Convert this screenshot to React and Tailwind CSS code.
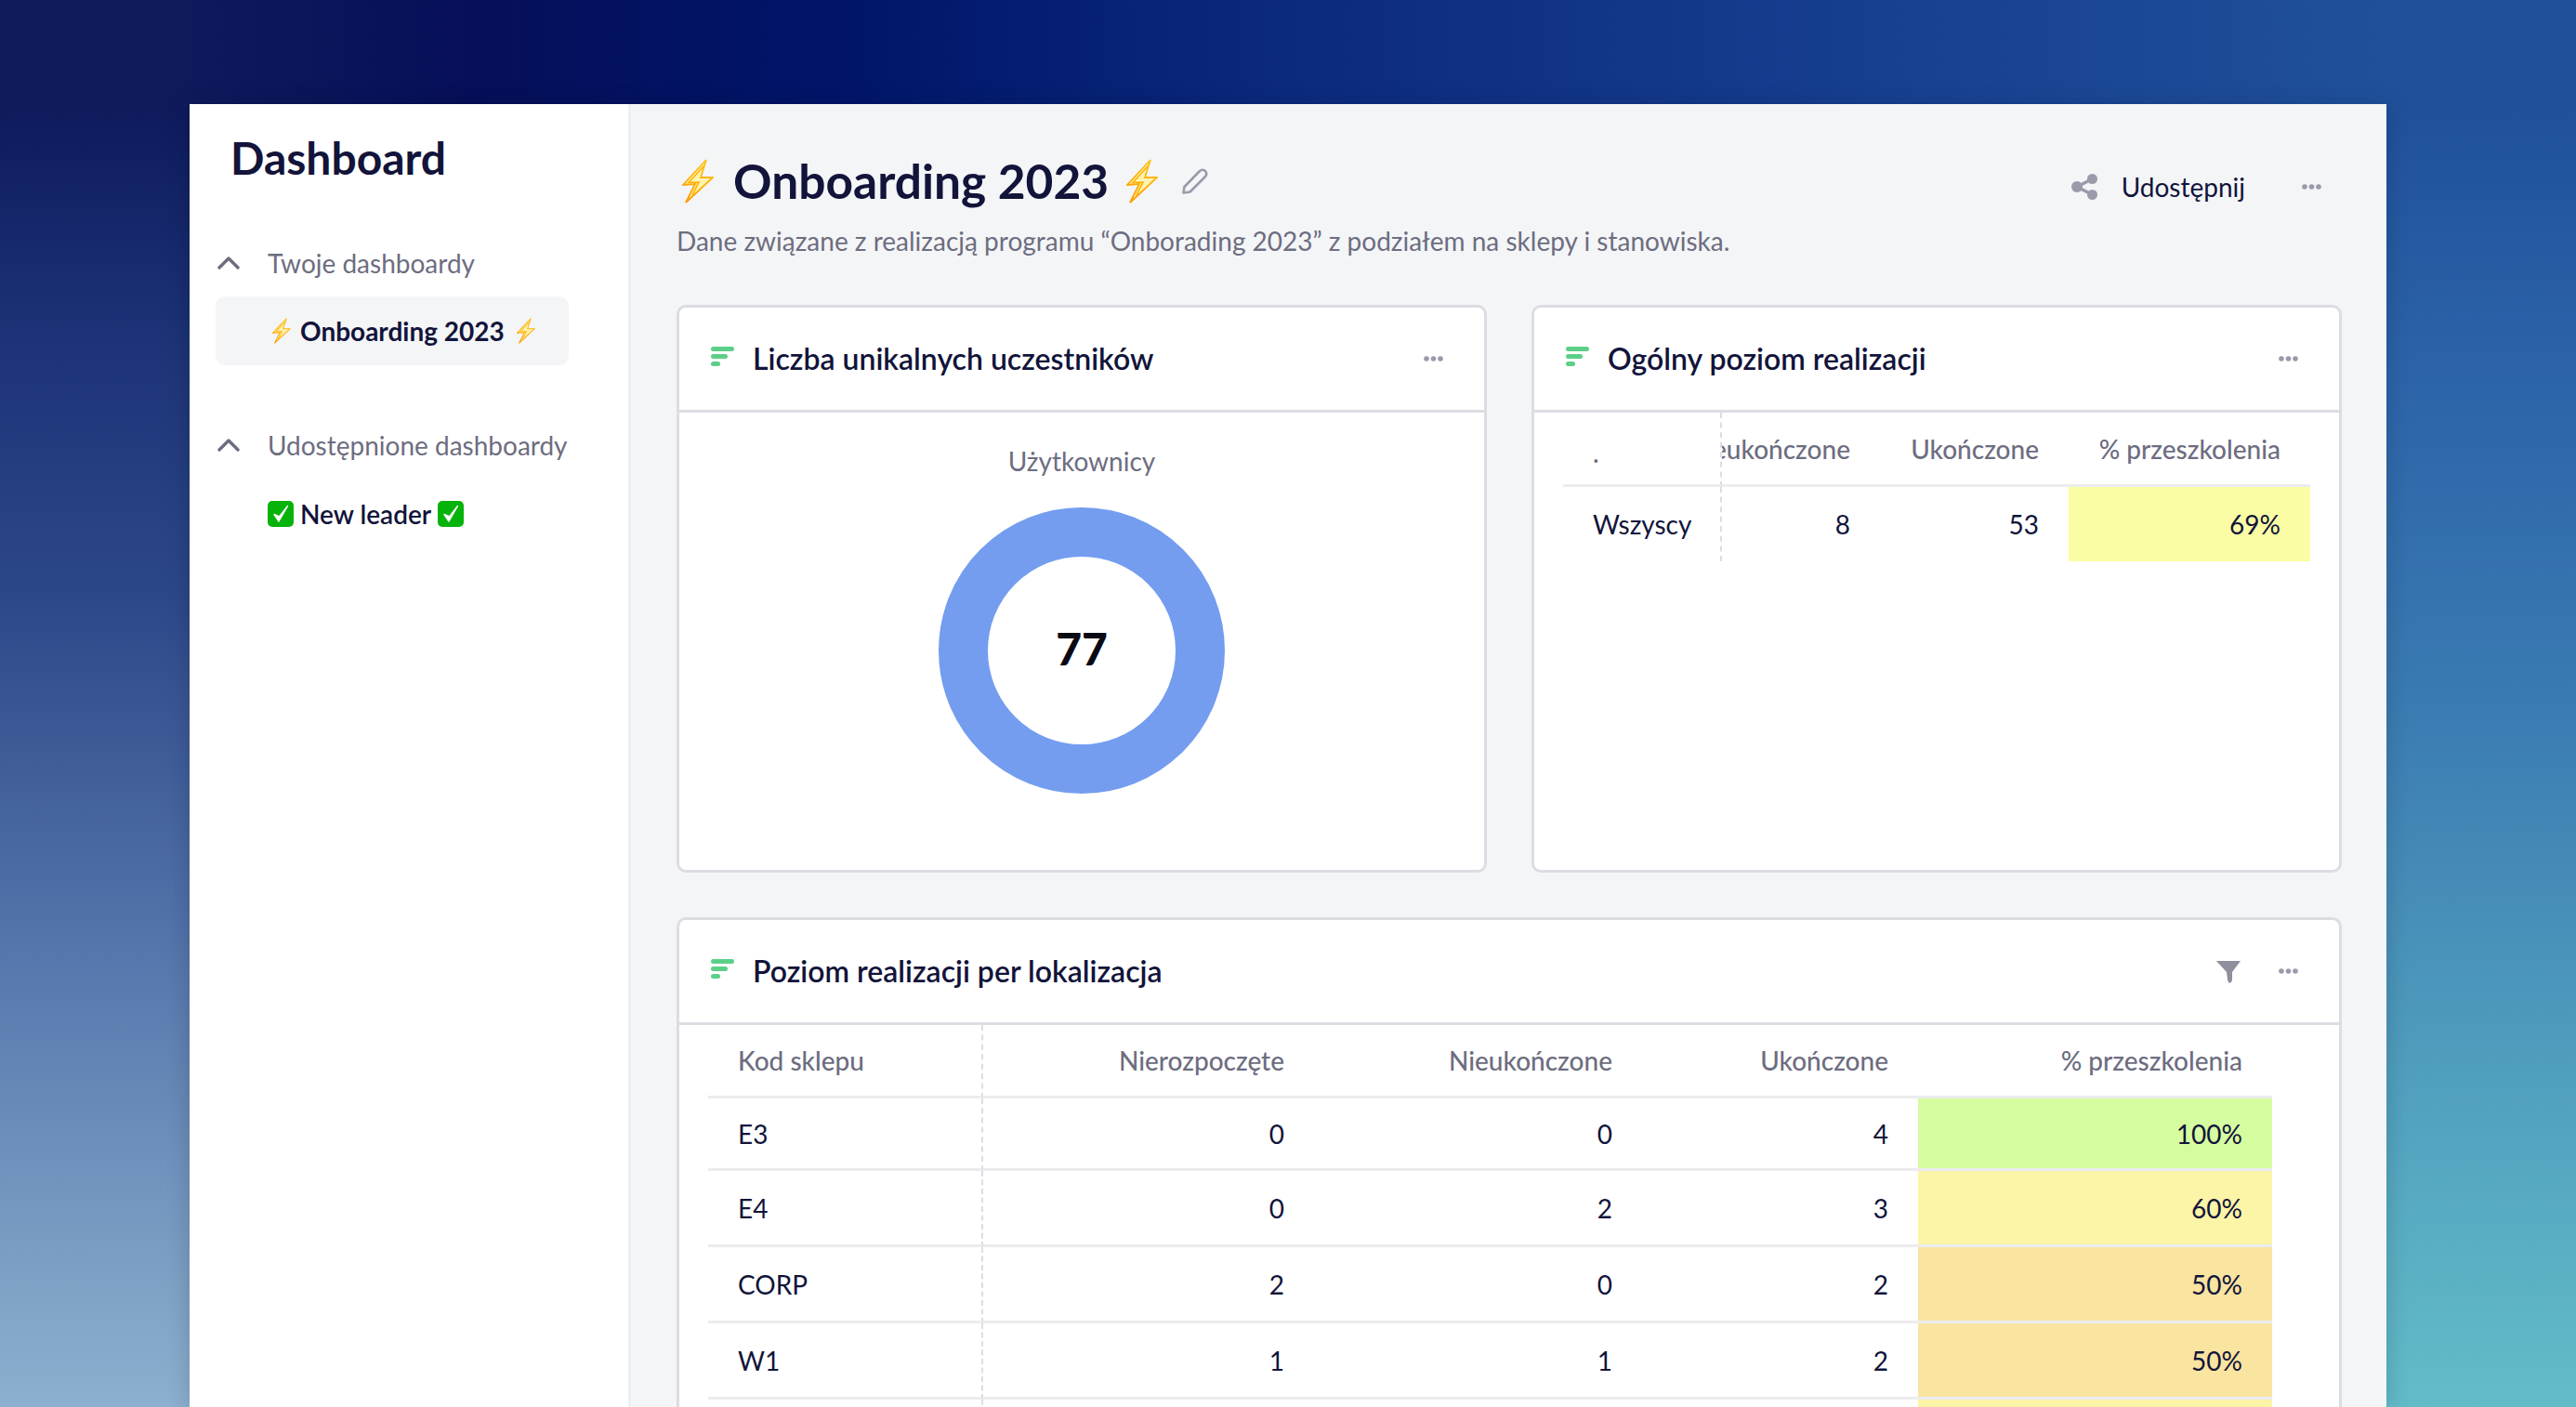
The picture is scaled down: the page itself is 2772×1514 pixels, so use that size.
const F = "font-['Lato','Noto_Sans',sans-serif]";

function Bolt({ className }) {
  return (
    <svg viewBox="0 0 34 48" className={className}>
      <defs>
        <linearGradient id="bg" x1="0.7" y1="0" x2="0.3" y2="1">
          <stop offset="0" stopColor="#ffc21a" />
          <stop offset="1" stopColor="#ff9d00" />
        </linearGradient>
      </defs>
      <path d="M26 1 L1 28 L14 27 L4 47 L33 20 L20 20 Z" fill="#fff3b0" stroke="url(#bg)" strokeWidth="1.8" strokeLinejoin="miter" />
      <path d="M23 8 L7 25.5 L18 25 L11 39" fill="none" stroke="#ffb300" strokeWidth="1.6" />
    </svg>
  );
}

function Check({ className }) {
  return (
    <svg viewBox="0 0 28 28" className={className}>
      <rect x="0" y="0" width="28" height="28" rx="5" fill="#06b30b" />
      <path d="M7 14.5 L12 22 L21.5 5.5 L12.5 17 Z" fill="#fff" stroke="#fff" strokeWidth="1.4" strokeLinejoin="round" />
    </svg>
  );
}

function Bars() {
  return (
    <svg viewBox="0 0 25 21" className="w-[25px] h-[21px] shrink-0 -mt-[6px]">
      <rect x="0" y="0" width="25" height="5" rx="2.5" fill="#5ccf89" />
      <rect x="0" y="8" width="18" height="5" rx="2.5" fill="#5ccf89" />
      <rect x="0" y="16" width="10" height="5" rx="2.5" fill="#5ccf89" />
    </svg>
  );
}

function Dots({ className = "" }) {
  return (
    <svg viewBox="0 0 21 6" className={`w-[21px] h-[6px] shrink-0 ${className}`}>
      <circle cx="3" cy="3" r="2.8" fill="#9a9aaa" />
      <circle cx="10.5" cy="3" r="2.8" fill="#9a9aaa" />
      <circle cx="18" cy="3" r="2.8" fill="#9a9aaa" />
    </svg>
  );
}

function Chevron() {
  return (
    <svg viewBox="0 0 24 14" className="w-[24px] h-[14px] shrink-0" fill="none" stroke="#6d6d80" strokeWidth="3.4" strokeLinecap="round" strokeLinejoin="round">
      <path d="M2 12 L12 2 L22 12" />
    </svg>
  );
}

function CardHead({ title, children }) {
  return (
    <div className="h-[113px] flex items-center pl-[34px] pr-[44px] border-b-[3px] border-[#dcdde2] shrink-0">
      <Bars />
      <span className="ml-[20px] text-[32px] font-semibold text-[#12143a] whitespace-nowrap">{title}</span>
      <div className="ml-auto flex items-center gap-[41px]">{children}<Dots /></div>
    </div>
  );
}

const FIRST = "[border-right:2px_dashed_#dcdde2]";
const FIRST_B = "[border-right:2px_dashed_#dcdde2] [border-bottom:3px_solid_#ececef]";

const rows = [
  ["E3", "0", "0", "4", "100%", "bg-[#d6fca0]", "h-[78px]"],
  ["E4", "0", "2", "3", "60%", "bg-[#fcf4a6]", "h-[82px]"],
  ["CORP", "2", "0", "2", "50%", "bg-[#f9e4a0]", "h-[82px]"],
  ["W1", "1", "1", "2", "50%", "bg-[#f9e4a0]", "h-[82px]"],
  ["", "", "", "", "", "bg-[#fcf4a6]", "h-[82px]"],
];

function LocRow({ r }) {
  return (
    <div className={`flex text-[28px] text-[#12143a] items-stretch ${r[6]} shrink-0`}>
      <div className={`w-[296px] pl-[32px] flex items-center ${FIRST_B}`}>{r[0]}</div>
      {[["w-[356px]", r[1]], ["w-[353px]", r[2]], ["w-[297px]", r[3]]].map(([w, v], i) => (
        <div key={i} className={`${w} pr-[32px] flex items-center justify-end border-b-[3px] border-[#ececef]`}>{v}</div>
      ))}
      <div className={`w-[381px] pr-[32px] flex items-center justify-end border-b-[3px] border-[#ececef] ${r[5]}`}>{r[4]}</div>
    </div>
  );
}

export default function App() {
  return (
    <div className={`${F} w-[2772px] h-[1514px] overflow-hidden pt-[112px] pl-[204px] [background:linear-gradient(90deg,#0e1a5c_0px,#060f58_300px,#00156a_700px,#0c2a7e_1200px,#163f90_1800px,#20509b_2364px)_204px_0/2364px_112px_no-repeat,linear-gradient(180deg,#0e1a5c_0%,#0e1a5c_7.4%,#1c3377_24%,#2c4788_42%,#5676ad_68%,#7598c0_86%,#8db0d0_100%)_left/50%_100%_no-repeat,linear-gradient(180deg,#20509b_0%,#20509b_7.4%,#2b62a8_25%,#3a7bb2_50%,#4b96bb_70%,#57aac2_85%,#62bcc8_100%)_right/50%_100%_no-repeat]`}>
      <div className="relative w-[2364px] h-[1402px] flex bg-[#f4f5f7] shadow-[0_4px_24px_rgba(0,0,0,0.18)]">
        <aside className="w-[475px] h-full shrink-0 bg-white border-r-[3px] border-[#eeeff2]">
          <div className="pl-[44px] pt-[24px] text-[48px] leading-[68px] font-bold text-[#12143a]">Dashboard</div>
          <div className="mt-[59px] flex items-center pl-[30px] h-[40px]">
            <Chevron />
            <span className="ml-[30px] text-[28px] text-[#6d6d80] whitespace-nowrap">Twoje dashboardy</span>
          </div>
          <div className="mt-[16px] ml-[28px] w-[380px] h-[74px] rounded-[10px] bg-[#f4f5f7] flex items-center pl-[61px] whitespace-nowrap">
            <Bolt className="w-[20px] h-[28px] shrink-0" />
            <span className="ml-[10px] text-[28px] font-bold text-[#12143a]">Onboarding 2023</span>
            <Bolt className="ml-[13px] w-[20px] h-[28px] shrink-0" />
          </div>
          <div className="mt-[66px] flex items-center pl-[30px] h-[40px]">
            <Chevron />
            <span className="ml-[30px] text-[28px] text-[#6d6d80] whitespace-nowrap">Udostępnione dashboardy</span>
          </div>
          <div className="mt-[40px] pl-[84px] flex items-center h-[28px] whitespace-nowrap">
            <Check className="w-[28px] h-[28px] shrink-0" />
            <span className="ml-[7px] text-[28px] font-semibold text-[#12143a]">New leader</span>
            <Check className="ml-[7px] w-[28px] h-[28px] shrink-0" />
          </div>
        </aside>

        <main className="flex-1 min-w-0 pl-[49px] pr-[48px]">
          <div className="h-[216px] relative">
            <div className="flex items-center pt-[59px] h-[107px] pl-[6px] whitespace-nowrap">
              <Bolt className="w-[34px] h-[48px] shrink-0" />
              <span className="ml-[21px] text-[51.5px] font-bold text-[#12143a]">Onboarding 2023</span>
              <Bolt className="ml-[19px] w-[34px] h-[48px] shrink-0" />
              <svg viewBox="0 0 30 30" className="ml-[25px] w-[30px] h-[30px] shrink-0" fill="none" stroke="#9a9aaa" strokeWidth="2.6" strokeLinejoin="round">
                <path d="M2.5 27.5 L3.5 21 L20 4 Q23 1.5 26 4 Q28.5 7 26 10 L9.5 26.5 Z" />
              </svg>
            </div>
            <div className="mt-[19px] text-[28px] text-[#6d6d80] whitespace-nowrap">Dane związane z realizacją programu “Onborading 2023” z podziałem na sklepy i stanowiska.</div>
            <div className="absolute right-[22px] top-[68px] flex items-center">
              <svg viewBox="0 0 28 28" className="w-[28px] h-[28px]" fill="#9a9aaa" stroke="#9a9aaa">
                <circle cx="22.5" cy="5.5" r="5.5" stroke="none" />
                <circle cx="22.5" cy="22.5" r="5.5" stroke="none" />
                <circle cx="6" cy="14" r="6" stroke="none" />
                <path d="M6 14 L22.5 5.5 M6 14 L22.5 22.5" strokeWidth="3.5" fill="none" />
              </svg>
              <span className="ml-[26px] text-[28px] text-[#12143a]">Udostępnij</span>
              <Dots className="ml-[61px]" />
            </div>
          </div>

          <div className="flex gap-[48px]">
            <section className="w-[872px] h-[611px] bg-white border-[3px] border-[#dcdde2] rounded-[10px] flex flex-col overflow-hidden">
              <CardHead title="Liczba unikalnych uczestników" />
              <div className="flex flex-col items-center">
                <div className="mt-[32px] text-[28px] leading-[40px] text-[#6d6d80]">Użytkownicy</div>
                <svg viewBox="0 0 308 308" className="mt-[30px] w-[308px] h-[308px]">
                  <circle cx="154" cy="154" r="127.5" fill="none" stroke="#749df0" strokeWidth="53" />
                  <text x="154" y="170" textAnchor="middle" fontSize="48" fontWeight="900" fontFamily="Lato" fill="#0a0a14">77</text>
                </svg>
              </div>
            </section>
            <section className="w-[872px] h-[611px] bg-white border-[3px] border-[#dcdde2] rounded-[10px] flex flex-col overflow-hidden">
              <CardHead title="Ogólny poziom realizacji" />
              <div className="mx-[31px]">
                <div className="flex h-[80px] text-[28px] font-medium text-[#6d6d80]">
                  <div className={`w-[171px] pl-[32px] pt-[22px] ${FIRST_B}`}>.</div>
                  <div className="w-[170px] pr-[32px] flex items-center justify-end overflow-hidden whitespace-nowrap border-b-[3px] border-[#ececef]">Nieukończone</div>
                  <div className="w-[203px] pr-[32px] flex items-center justify-end whitespace-nowrap border-b-[3px] border-[#ececef]">Ukończone</div>
                  <div className="w-[260px] pr-[32px] flex items-center justify-end whitespace-nowrap border-b-[3px] border-[#ececef]">% przeszkolenia</div>
                </div>
                <div className="flex h-[80px] text-[28px] text-[#12143a]">
                  <div className={`w-[171px] pl-[32px] flex items-center ${FIRST}`}>Wszyscy</div>
                  <div className="w-[170px] pr-[32px] flex items-center justify-end">8</div>
                  <div className="w-[203px] pr-[32px] flex items-center justify-end">53</div>
                  <div className="w-[260px] pr-[32px] flex items-center justify-end bg-[#fbfda5]">69%</div>
                </div>
              </div>
            </section>
          </div>

          <section className="mt-[48px] w-[1792px] h-[700px] bg-white border-[3px] border-[#dcdde2] border-b-0 rounded-t-[10px] flex flex-col overflow-hidden">
            <CardHead title="Poziom realizacji per lokalizacja">
              <svg viewBox="0 0 26 24" className="w-[26px] h-[24px] mt-[2px]" fill="#8f8f9e">
                <path d="M0 0 H26 L17 12 V21 Q16 24 14 24 Q12 22 12 20 L11 12 Z" />
              </svg>
            </CardHead>
            <div className="ml-[31px]">
              <div className="flex h-[79px] text-[28px] font-medium text-[#6d6d80]">
                <div className={`w-[296px] pl-[32px] flex items-center ${FIRST_B}`}>Kod sklepu</div>
                <div className="w-[356px] pr-[32px] flex items-center justify-end border-b-[3px] border-[#ececef]">Nierozpoczęte</div>
                <div className="w-[353px] pr-[32px] flex items-center justify-end border-b-[3px] border-[#ececef]">Nieukończone</div>
                <div className="w-[297px] pr-[32px] flex items-center justify-end border-b-[3px] border-[#ececef]">Ukończone</div>
                <div className="w-[381px] pr-[32px] flex items-center justify-end border-b-[3px] border-[#ececef]">% przeszkolenia</div>
              </div>
              {rows.map((r, i) => <LocRow key={i} r={r} />)}
            </div>
          </section>
        </main>
      </div>
    </div>
  );
}
